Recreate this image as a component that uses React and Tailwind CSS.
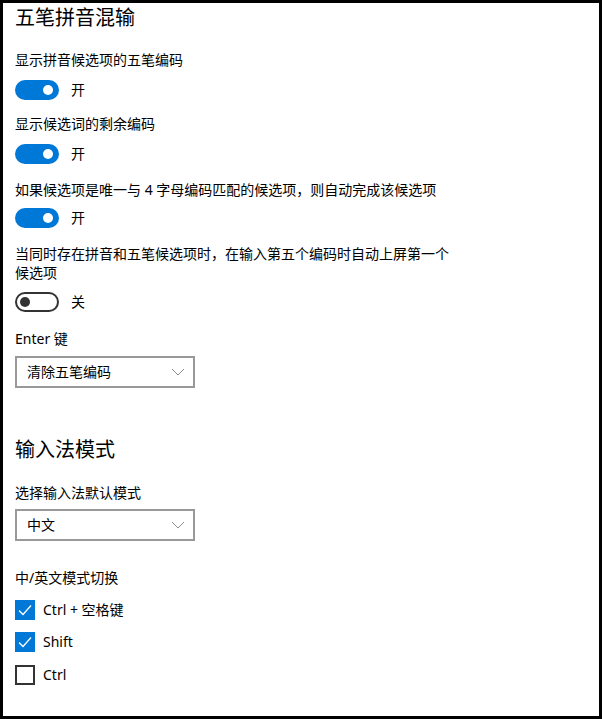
import React from "react";

const font = { fontFamily: '"Noto Sans", "Noto Sans CJK SC", sans-serif' };

// toggle switch, windows settings style
const Toggle = ({ on, label, className = "" }) => (
  <div className={`flex items-center h-[20px] ${className}`}>
    {on ? (
      <div className="w-[44px] h-[20px] rounded-full bg-[#0078d7] flex items-center justify-end pr-[6px]">
        <div className="w-[10px] h-[10px] rounded-full bg-white"></div>
      </div>
    ) : (
      <div className="w-[44px] h-[20px] rounded-full border-2 border-[#333333] flex items-center pl-[3px]">
        <div className="w-[10px] h-[10px] rounded-full bg-[#333333]"></div>
      </div>
    )}
    <span className="ml-[12px] text-[14px] leading-[20px] text-black">{label}</span>
  </div>
);

const Dropdown = ({ value, className = "" }) => (
  <div className={`w-[180px] h-[32px] border-2 border-[#999999] flex items-center justify-between pl-[10px] pr-[8px] ${className}`}>
    <span className="text-[14px] leading-[20px] text-black">{value}</span>
    <svg width="14" height="8" viewBox="0 0 14 8" fill="none">
      <path d="M1 1l6 6 6-6" stroke="#808080" strokeWidth="0.9" />
    </svg>
  </div>
);

const Checkbox = ({ checked, label, className = "" }) => (
  <div className={`flex items-center h-[20px] ${className}`}>
    {checked ? (
      <div className="w-[20px] h-[20px] bg-[#0078d7] flex items-center justify-center">
        <svg width="16" height="16" viewBox="0 0 16 16" fill="none">
          <path d="M2 8.5l4 4 8-9" stroke="#ffffff" strokeWidth="1.3" />
        </svg>
      </div>
    ) : (
      <div className="w-[20px] h-[20px] border-2 border-[#333333]"></div>
    )}
    <span className="ml-[8px] text-[14px] leading-[20px] text-black">{label}</span>
  </div>
);

export default function App() {
  return (
    <div style={font} className="w-[602px] h-[719px] border-[3px] border-black bg-white overflow-hidden">
      <div className="pl-[12px] pt-[1px] flex flex-col items-start">
        <h1 className="text-[20px] leading-[28px] text-black font-normal">五笔拼音混输</h1>

        <p className="mt-[18px] text-[14px] leading-[20px] text-black">显示拼音候选项的五笔编码</p>
        <Toggle on label="开" className="mt-[10px]" />

        <p className="mt-[14px] text-[14px] leading-[20px] text-black">显示候选词的剩余编码</p>
        <Toggle on label="开" className="mt-[10px]" />

        <p className="mt-[16px] text-[14px] leading-[20px] text-black">如果候选项是唯一与 4 字母编码匹配的候选项，则自动完成该候选项</p>
        <Toggle on label="开" className="mt-[8px]" />

        <p className="mt-[16px] w-[440px] text-[14px] leading-[19px] text-black">当同时存在拼音和五笔候选项时，在输入第五个编码时自动上屏第一个候选项</p>
        <Toggle label="关" className="mt-[10px]" />

        <p className="mt-[17px] text-[14px] leading-[20px] text-black">Enter 键</p>
        <Dropdown value="清除五笔编码" className="mt-[7px]" />

        <h2 className="mt-[48px] text-[20px] leading-[28px] text-black font-normal">输入法模式</h2>

        <p className="mt-[19px] text-[14px] leading-[20px] text-black">选择输入法默认模式</p>
        <Dropdown value="中文" className="mt-[6px]" />

        <p className="mt-[27px] text-[14px] leading-[20px] text-black">中/英文模式切换</p>
        <Checkbox checked label="Ctrl + 空格键" className="mt-[12px]" />
        <Checkbox checked label="Shift" className="mt-[12px]" />
        <Checkbox label="Ctrl" className="mt-[13px]" />
      </div>
    </div>
  );
}
